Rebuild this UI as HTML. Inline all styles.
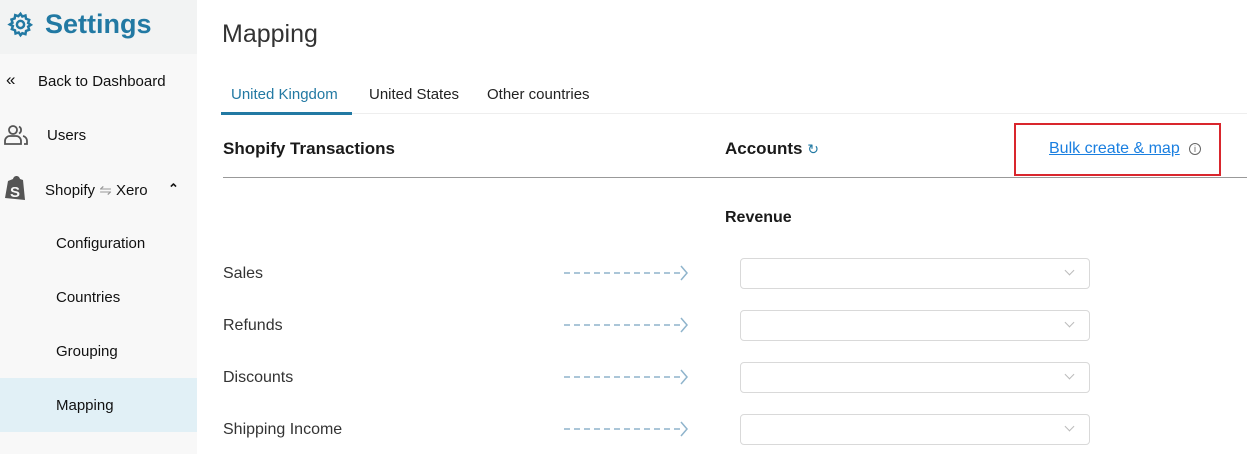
<!DOCTYPE html>
<html><head><style>
body{margin:0;width:1247px;height:454px;overflow:hidden;background:#fff;font-family:"Liberation Sans",sans-serif;position:relative;color:#1a1a1a}
.a{position:absolute;white-space:nowrap}
.side{position:absolute;left:0;top:0;width:197px;height:454px;background:#f8f8f8}
.head{position:absolute;left:0;top:0;width:197px;height:54px;background:#f2f3f3}
.nav{font-size:15px;color:#111}
.sel{position:absolute;left:740px;width:348px;height:29px;border:1px solid #d9d9d9;border-radius:4px;background:#fff}
.sel:after{content:"";position:absolute;right:16px;top:8px;width:6px;height:6px;border-right:1px solid #bbb;border-bottom:1px solid #bbb;transform:rotate(45deg)}
.row{font-size:16px;color:#333}
.arr{position:absolute;left:562px}
</style></head><body>
<div class="side"></div><div class="head"></div>
<svg class="a" style="left:7px;top:11px" width="27" height="27" viewBox="0 0 24 24" fill="none" stroke="#2279a3" stroke-width="2.2"><circle cx="12" cy="12" r="3.2"/><path d="M12 2.5l1.6 2.4 2.8-.9.5 2.9 2.8 1-.9 2.8 2.4 1.6-2.4 1.6.9 2.8-2.8 1-.5 2.9-2.8-.9L12 21.5l-1.6-2.4-2.8.9-.5-2.9-2.8-1 .9-2.8L2.5 12l2.4-1.6-.9-2.8 2.8-1 .5-2.9 2.8.9z"/></svg>
<div class="a" style="left:45px;top:9px;font-size:27px;font-weight:bold;color:#2279a3">Settings</div>
<div class="a nav" style="left:6px;top:70px;font-size:17px">«</div>
<div class="a nav" style="left:38px;top:73px">Back to Dashboard</div>
<svg class="a" style="left:4px;top:125px" width="24" height="20" viewBox="0 0 24 20" fill="none" stroke="#555" stroke-width="1.8"><circle cx="9" cy="5" r="4"/><path d="M1 19v-3a5 5 0 0 1 5-5h6a5 5 0 0 1 5 5v3zM15 1.5a4 4 0 0 1 0 7M19 11a5 5 0 0 1 4 5v3h-3"/></svg>
<div class="a nav" style="left:47px;top:127px">Users</div>
<svg class="a" style="left:4px;top:175px" width="22" height="27" viewBox="0 0 22 27"><path d="M4 6l5-2c1-4 6-4 7 0l3 1 2 20-20-2z" fill="#555"/><text x="6" y="22" font-size="15" font-weight="bold" fill="#f8f8f8" font-family="Liberation Sans">S</text></svg>
<div class="a nav" style="left:45px;top:181px">Shopify <span style="color:#999">⇋</span> Xero</div>
<div class="a nav" style="left:168px;top:181px;font-weight:bold;font-size:13px">⌃</div>
<div class="a nav" style="left:56px;top:235px">Configuration</div>
<div class="a nav" style="left:56px;top:289px">Countries</div>
<div class="a nav" style="left:56px;top:343px">Grouping</div>
<div class="a" style="left:0;top:378px;width:197px;height:54px;background:#e1f0f6"></div>
<div class="a nav" style="left:56px;top:397px">Mapping</div>

<div class="a" style="left:222px;top:20px;font-size:25px;color:#333">Mapping</div>
<div class="a" style="left:231px;top:86px;font-size:15px;color:#2279a3">United Kingdom</div>
<div class="a" style="left:369px;top:86px;font-size:15px;color:#222">United States</div>
<div class="a" style="left:487px;top:86px;font-size:15px;color:#222">Other countries</div>
<div class="a" style="left:221px;top:113px;width:1026px;height:1px;background:#eee"></div>
<div class="a" style="left:221px;top:112px;width:131px;height:3px;background:#2279a3"></div>
<div class="a" style="left:223px;top:139px;font-size:17px;font-weight:bold">Shopify Transactions</div>
<div class="a" style="left:725px;top:139px;font-size:17px;font-weight:bold">Accounts <span style="color:#2279a3;font-weight:normal;font-size:14px">↻</span></div>
<div class="a" style="left:1014px;top:123px;width:203px;height:49px;border:2.5px solid #d9262d"></div>
<div class="a" style="left:1049px;top:140px;font-size:16px;color:#1a7fe0;text-decoration:underline">Bulk create &amp; map</div>
<div class="a" style="left:1189px;top:143px;width:10px;height:10px;border:1px solid #666;border-radius:50%;font-size:9px;text-align:center;line-height:10px;color:#666">i</div>
<div class="a" style="left:223px;top:177px;width:1024px;height:1px;background:#999"></div>
<div class="a" style="left:725px;top:209px;font-size:16px;font-weight:bold">Revenue</div>

<svg width="0" height="0" style="position:absolute"><defs><g id="ar" fill="none" stroke="#8fb4cc" stroke-width="1.5"><path d="M2 9H122" stroke-dasharray="6 4"/><path d="M119 2l6 7-6 7"/></g></defs></svg>
<div class="a row" style="left:223px;top:265px">Sales</div><svg class="arr" style="top:264px" width="130" height="18"><use href="#ar"/></svg><div class="sel" style="top:258px"></div>
<div class="a row" style="left:223px;top:317px">Refunds</div><svg class="arr" style="top:316px" width="130" height="18"><use href="#ar"/></svg><div class="sel" style="top:310px"></div>
<div class="a row" style="left:223px;top:369px">Discounts</div><svg class="arr" style="top:368px" width="130" height="18"><use href="#ar"/></svg><div class="sel" style="top:362px"></div>
<div class="a row" style="left:223px;top:421px">Shipping Income</div><svg class="arr" style="top:420px" width="130" height="18"><use href="#ar"/></svg><div class="sel" style="top:414px"></div>
</body></html>
